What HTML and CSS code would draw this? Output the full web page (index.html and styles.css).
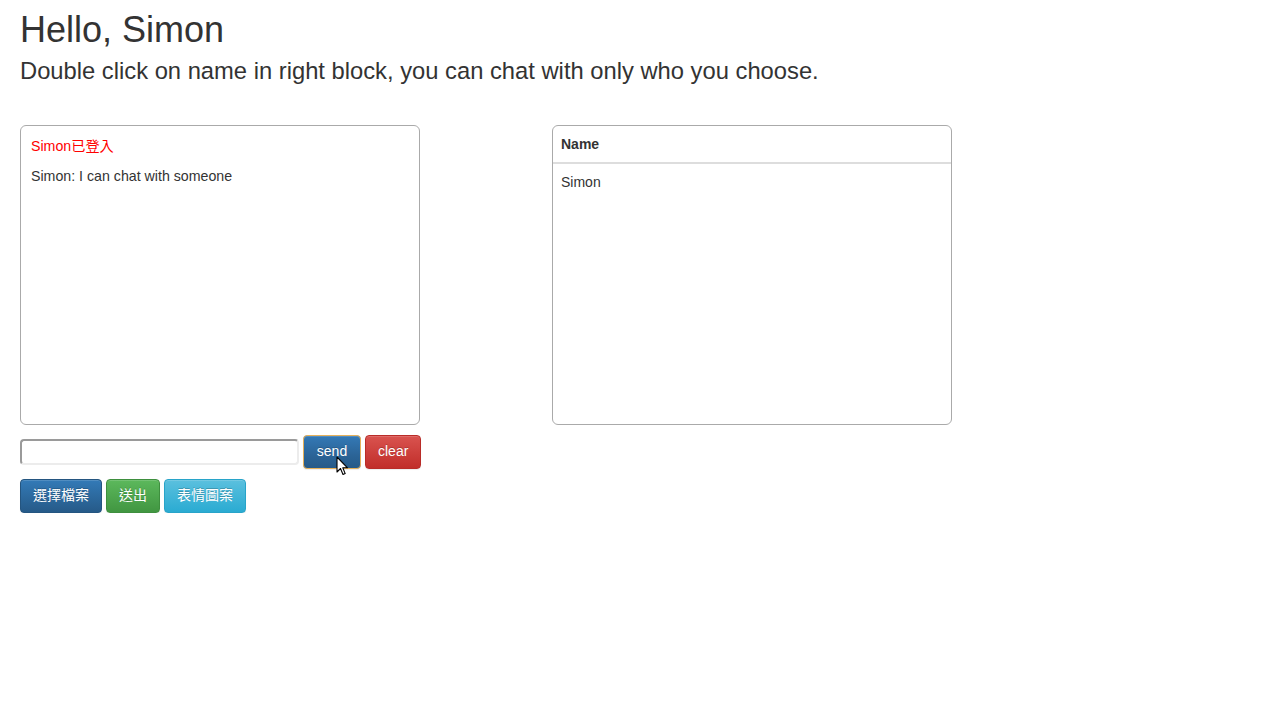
FILE: index.html
```html
<!DOCTYPE html>
<html>
<head>
<meta charset="utf-8">
<title>Chat</title>
<link rel="stylesheet" href="styles.css">
</head>
<body>
<div class="page">
  <h1 class="title">Hello, Simon</h1>
  <h3 class="subtitle">Double click on name in right block, you can chat with only who you choose.</h3>
  <div class="panels">
    <div class="chat-box">
      <p class="sys">Simon已登入</p>
      <p>Simon: I can chat with someone</p>
    </div>
    <div class="users-box">
      <table class="users">
        <thead><tr><th>Name</th></tr></thead>
        <tbody><tr><td>Simon</td></tr></tbody>
      </table>
    </div>
  </div>
  <div class="send-row">
    <input class="msg" type="text">
    <span class="send-wrap">
      <button class="btn btn-primary btn-focus">send</button>
      <svg class="cursor" width="13" height="20" viewBox="0 0 13 20"><path d="M1 1 L1 16 L4.5 12.5 L7 18.5 L9.2 17.6 L6.8 11.8 L11.5 11.8 Z" fill="#fff" stroke="#000" stroke-width="1.1" stroke-linejoin="round"/></svg>
    </span>
    <button class="btn btn-danger">clear</button>
  </div>
  <div class="tool-row">
    <button class="btn btn-primary">選擇檔案</button>
    <button class="btn btn-success">送出</button>
    <button class="btn btn-info">表情圖案</button>
  </div>
</div>
</body>
</html>
```
FILE: styles.css
```css
html, body {
  margin: 0;
  padding: 0;
  background: #fff;
}
body {
  font-family: "Liberation Sans", Arial, "Noto Sans CJK TC", sans-serif;
  font-size: 14px;
  line-height: 1.42857;
  color: #333;
}
.page {
  padding: 10px 20px 0 20px;
}
.title {
  font-size: 36px;
  font-weight: 400;
  line-height: 1.1;
  margin: 0 0 8px 0;
}
.subtitle {
  font-size: 23.75px;
  font-weight: 400;
  line-height: 26px;
  margin: 0 0 41px 0;
}
.panels {
  display: flex;
  gap: 132px;
}
.chat-box, .users-box {
  box-sizing: border-box;
  width: 400px;
  height: 300px;
  border: 1px solid #aaa;
  border-radius: 6px;
  overflow: hidden;
}
.chat-box {
  padding: 10px;
}
.chat-box p {
  margin: 0 0 10px 0;
  font-size: 14.2px;
}
.chat-box .sys {
  color: #f00;
}
.users {
  width: 100%;
  border-collapse: collapse;
  border-spacing: 0;
}
.users th, .users td {
  text-align: left;
  padding: 9px 8px 7px 8px;
  line-height: 1.42857;
}
.users th {
  font-weight: 700;
  border-bottom: 2px solid #ddd;
}
.send-row {
  display: flex;
  align-items: center;
  gap: 4px;
  margin-top: 10px;
}
.msg {
  box-sizing: border-box;
  width: 279px;
  height: 26px;
  margin: 1px 0 0 0;
  padding: 1px 4px;
  border: 2px solid #ececec;
  border-top-color: #9a9a9a;
  border-left-color: #9a9a9a;
  border-radius: 4px;
  font: 14px "Liberation Sans", Arial, sans-serif;
}
.send-wrap {
  position: relative;
  display: inline-block;
}
.cursor {
  position: absolute;
  left: 33px;
  top: 21px;
}
.tool-row {
  display: flex;
  gap: 4px;
  margin-top: 10px;
}
.btn {
  display: inline-block;
  box-sizing: border-box;
  height: 34px;
  padding: 6px 12px;
  font-family: "Liberation Sans", Arial, "Noto Sans CJK TC", sans-serif;
  font-size: 14px;
  line-height: 1.42857;
  color: #fff;
  border: 1px solid transparent;
  border-radius: 4px;
  text-shadow: 0 -1px 0 rgba(0,0,0,.2);
  box-shadow: inset 0 1px 0 rgba(255,255,255,.15), 0 1px 1px rgba(0,0,0,.075);
  background-repeat: repeat-x;
  cursor: pointer;
}
.btn-primary {
  background-color: #265a88;
  background-image: linear-gradient(to bottom, #337ab7 0, #265a88 100%);
  border-color: #245580;
}
.btn-focus {
  background-image: linear-gradient(to bottom, #3479b6 0, #2b6497 60%, #265a88 100%);
  border-color: #e5b05a;
  width: 58px;
}
.btn-danger {
  background-image: linear-gradient(to bottom, #d9534f 0, #c12e2a 100%);
  border-color: #b92c28;
}
.btn-success {
  background-image: linear-gradient(to bottom, #5cb85c 0, #419641 100%);
  border-color: #3e8f3e;
}
.btn-info {
  background-image: linear-gradient(to bottom, #5bc0de 0, #2aabd2 100%);
  border-color: #28a4c9;
}
```
